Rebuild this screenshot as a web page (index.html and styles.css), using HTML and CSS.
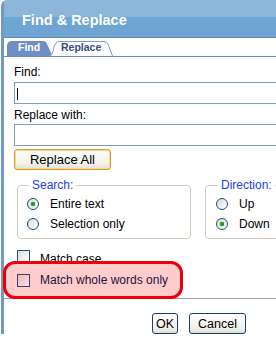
FILE: index.html
```html
<!DOCTYPE html>
<html lang="en">
<head>
  <meta charset="UTF-8" />
  <title>Find &amp; Replace</title>
  <link rel="stylesheet" href="styles.css">
</head>
<body>

  <div class="window">
    <div class="titlebar">Find &amp; Replace</div>

    <div class="tabs">
      <div class="tab tab-active">
        <svg class="tab-shape" width="46" height="15" viewBox="0 0 46 15">
          <path d="M0,15 L0,5 Q0,0 5,0 L36,0 Q39,0 40,3 L45.5,15 Z" fill="#6e8fc6" />
        </svg>
        <span>Find</span>
      </div>
      <div class="tab tab-idle">
        <svg class="tab-shape" width="64" height="15" viewBox="0 0 64 15">
          <path d="M0,15 C3,15 4,11 5,6 Q6.5,0.5 10.5,0.5 L55,0.5 Q58,0.5 59,3 L63.5,15" fill="#fff" stroke="#7c9dcd" stroke-width="1" />
        </svg>
        <span>Replace</span>
      </div>
    </div>

    <div class="panel">
      <div class="field-label">Find:</div>
      <div class="text-input"><span class="caret"></span></div>

      <div class="field-label label-gap">Replace with:</div>
      <div class="text-input input-gap"></div>

      <button class="btn-replace">Replace All</button>

      <div class="groups">
        <fieldset class="group group-search">
          <legend>Search:</legend>
          <label class="option"><input type="radio" name="search" checked> Entire text</label>
          <label class="option"><input type="radio" name="search"> Selection only</label>
        </fieldset>
        <fieldset class="group group-direction">
          <legend>Direction:</legend>
          <label class="option"><input type="radio" name="dir"> Up</label>
          <label class="option"><input type="radio" name="dir" checked> Down</label>
        </fieldset>
      </div>

      <label class="check-row match-case"><input type="checkbox"> <span>Match case</span></label>
      <label class="check-row highlight"><input type="checkbox"> <span>Match whole words only</span></label>
    </div>

    <div class="footer">
      <button class="btn btn-ok">OK</button>
      <button class="btn btn-cancel">Cancel</button>
    </div>
  </div>

</body>
</html>
```

FILE: styles.css
```css
html, body {
  margin: 0;
  width: 276px;
  height: 342px;
  overflow: hidden;
  background: #fff;
}

body {
  font-family: "Liberation Sans", Arial, sans-serif;
  font-size: 12px;
  color: #000;
}

.window {
  width: 390px;
  margin-left: 1px;
  border-left: 3px solid #7498c6;
  border-top-left-radius: 6px;
  background: #fff;
}

.titlebar {
  height: 34px;
  padding: 3px 0 0 18px;
  line-height: 34px;
  font-size: 14.5px;
  font-weight: bold;
  color: #fff;
  background: linear-gradient(#8cb6da 0, #8cb6da 17px, #6fa5d2 17px);
  border-bottom: 1px solid #5b8cba;
  border-top-left-radius: 4px;
}

.tabs {
  display: flex;
  align-items: flex-end;
  height: 15px;
  padding: 3px 0 0 3px;
  border-bottom: 1px solid #6b8cc4;
}

.tab {
  position: relative;
  height: 15px;
  font-size: 10.5px;
  font-weight: bold;
  line-height: 13px;
}

.tab-shape {
  position: absolute;
  left: 0;
  top: 0;
}

.tab span {
  position: relative;
}

.tab-active {
  width: 46px;
  padding-left: 11px;
  box-sizing: border-box;
  color: #fff;
}

.tab-idle {
  width: 64px;
  margin-left: -4px;
  padding-left: 12px;
  box-sizing: border-box;
  color: #2f4f84;
}

.panel {
  padding: 8px 0 0 10px;
}

.field-label {
  line-height: 14px;
}

.label-gap {
  margin-top: 4px;
}

.text-input {
  height: 20px;
  margin-top: 3px;
  border: 1px solid #7f9db9;
  background: #fff;
  position: relative;
}

.input-gap {
  margin-top: 2px;
}

.caret {
  position: absolute;
  left: 2px;
  top: 5px;
  width: 1px;
  height: 12px;
  background: #000;
}

.btn-replace {
  display: block;
  width: 97px;
  height: 21px;
  margin-top: 3px;
  padding: 0;
  font-family: inherit;
  font-size: 13px;
  color: #000;
  border: 1px solid #e39b2a;
  border-radius: 3px;
  box-shadow: inset 0 0 0 1px #fbd58e;
  background: linear-gradient(#fff, #f3f2ec 70%, #e4e2d8);
}

.groups {
  display: flex;
  gap: 14px;
  margin: 8px 0 0 3px;
}

.group {
  margin: 0;
  padding: 2px 9px 4px;
  border: 1px solid #d0d0bf;
  border-radius: 4px;
}

.group legend {
  margin-left: 2px;
  padding: 0 3px;
  line-height: 14px;
  color: #233cf0;
}

.group-search {
  width: 174px;
  box-sizing: border-box;
}

.group-direction {
  width: 120px;
  box-sizing: border-box;
  padding-left: 10px;
}

.option {
  display: flex;
  align-items: center;
  height: 20px;
  gap: 11px;
}

.option input {
  appearance: none;
  margin: 0;
  width: 12px;
  height: 12px;
  border: 1px solid #1c5180;
  border-radius: 50%;
  background: linear-gradient(135deg, #dcdcd5, #fff);
}

.option input:checked {
  background: radial-gradient(circle, #21a121 0, #21a121 2px, transparent 2.6px),
    linear-gradient(135deg, #dcdcd5, #fff);
}

.check-row {
  display: flex;
  align-items: center;
  gap: 10px;
  height: 13px;
  margin: 11px 0 0 3px;
  line-height: 14px;
}

.match-case span {
  margin-top: 5px;
}

.check-row input {
  appearance: none;
  margin: 0;
  width: 13px;
  height: 13px;
  border: 1px solid #1c5180;
  background: linear-gradient(135deg, #dcdcd5, #fff);
  flex-shrink: 0;
}

.highlight {
  position: relative;
  width: 180px;
  height: 38px;
  box-sizing: border-box;
  margin: -2px 0 -1px -11px;
  padding-left: 11px;
  border: 3px solid #e8000b;
  border-radius: 12px;
  background: #ffcccc;
}

.highlight span {
  color: #1e1240;
}

.highlight input {
  border-color: #4a3a70;
  background: linear-gradient(135deg, #e8b8bc, #fce2e2);
}

.footer {
  display: flex;
  justify-content: center;
  gap: 11px;
  padding: 14px 0 0;
  border-top: 1px solid #a0a0a0;
}

.btn {
  height: 21px;
  padding: 0;
  font-family: inherit;
  font-size: 12.5px;
  color: #000;
  border: 1px solid #1c3d6e;
  border-radius: 3px;
  background: linear-gradient(#fff, #f2f1ec 70%, #e2e0d6);
}

.btn-ok {
  width: 26px;
}

.btn-cancel {
  width: 57px;
}
```
